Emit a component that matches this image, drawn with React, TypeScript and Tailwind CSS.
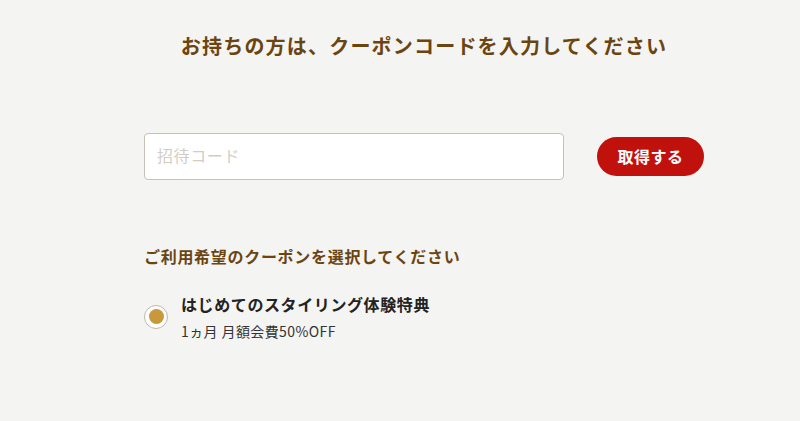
import { useState } from "react";

const font = { fontFamily: '"Noto Sans CJK JP", "Noto Sans", sans-serif' };

export default function App() {
  const [code, setCode] = useState("");
  const [selected, setSelected] = useState(true);

  return (
    <div className="min-h-[421px] w-[800px] bg-[#f4f4f2]" style={font}>
      <div className="ml-[144px] w-[560px] pt-[31px]">
        <h1 className="text-center text-[20px] font-bold leading-[30px] tracking-[1.2px] text-[#6b4410]">
          お持ちの方は、クーポンコードを入力してください
        </h1>

        <div className="mt-[72px] flex items-center justify-between">
          <input
            value={code}
            onChange={(e) => setCode(e.target.value)}
            placeholder="招待コード"
            className="h-[47px] w-[420px] rounded-[4px] border border-[#c9c0b5] bg-white px-3 pb-[3px] text-[16px] tracking-[0.6px] text-[#333] placeholder:text-[#d3ccc3] focus:outline-none"
          />
          <button className="h-[39px] w-[107px] rounded-full bg-[#c1110d] pb-[1px] text-[16px] font-bold tracking-[0.5px] text-white">
            取得する
          </button>
        </div>

        <h2 className="mt-[64px] text-[16px] font-bold leading-[24px] tracking-[0.7px] text-[#6b4410]">
          ご利用希望のクーポンを選択してください
        </h2>

        <label className="mt-[23px] flex cursor-pointer items-center gap-[13px]">
          <span
            onClick={() => setSelected(!selected)}
            className="flex h-[24px] w-[24px] shrink-0 items-center justify-center rounded-full border border-[#c3b5a6] bg-white"
          >
            {selected ? <span className="h-[15px] w-[15px] rounded-full bg-[#c9983b]" /> : null}
          </span>
          <span className="flex flex-col">
            <span className="text-[16px] font-bold leading-[26px] tracking-[0.6px] text-[#222]">
              はじめてのスタイリング体験特典
            </span>
            <span className="mt-[3px] text-[14px] leading-[22px] tracking-[0.4px] text-[#333]">
              1ヵ月 月額会費50%OFF
            </span>
          </span>
        </label>
      </div>
    </div>
  );
}
